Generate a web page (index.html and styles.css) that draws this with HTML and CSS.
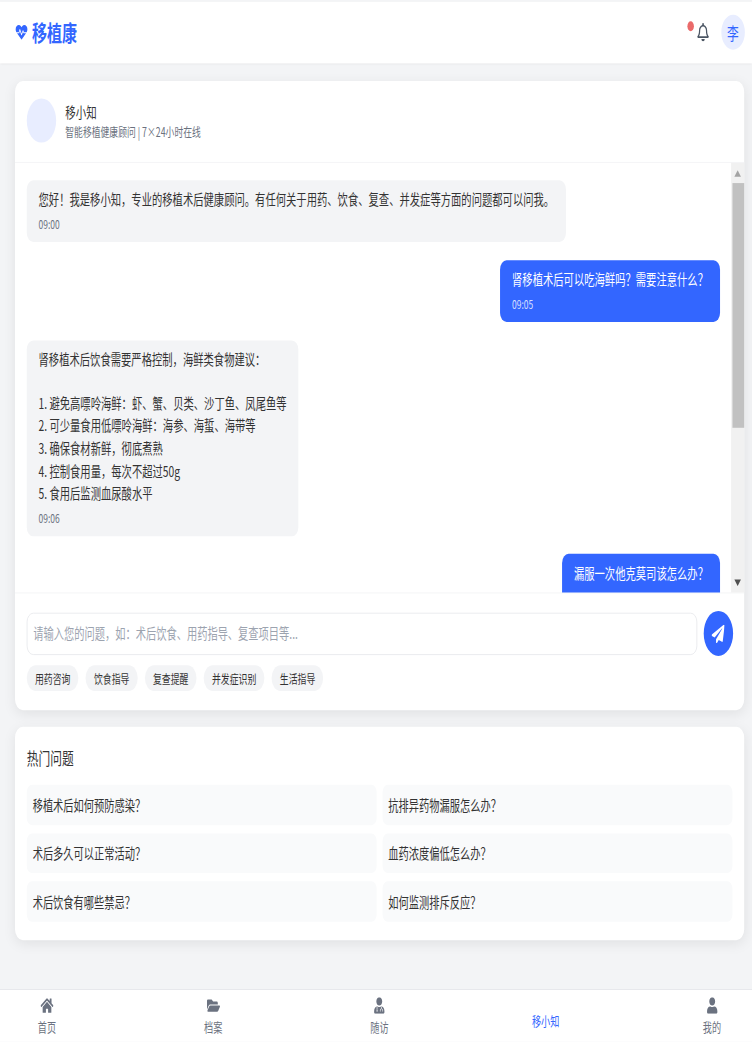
FILE: index.html

```html
<!DOCTYPE html>
<html lang="zh-CN">
<head>
    <meta charset="UTF-8">
    <meta name="viewport" content="width=device-width, initial-scale=1.0">
    <title>移植康 - 移小知</title>
    <link rel="stylesheet" href="styles.css">
</head>
<body>
    <div class="frame">
    <div class="page">
        <header class="topbar">
            <div class="brand">
                <svg class="brand-icon" viewBox="0 0 512 512"><path d="M320.2 243.8l-49.7 99.4c-6 12.1-23.4 11.7-28.9-.6l-56.9-126.3-30 71.7H60.6l182.5 186.5c7.1 7.3 18.6 7.3 25.7 0L451.4 288H342.3l-22.1-44.2zM473.7 73.9l-2.4-2.5c-51.5-52.6-135.8-52.6-187.4 0L256 100l-27.9-28.5c-51.5-52.7-135.9-52.7-187.4 0l-2.4 2.4C-10.4 123.7-12.5 203 31 256h102.4l35.9-86.2c5.4-12.9 23.6-13.2 29.4-.4l58.2 129.3 49-97.9c5.9-11.8 22.7-11.8 28.6 0l27.6 55.2H481c43.5-53 41.4-132.3-7.3-182.1z"/></svg>
                <span>移植康</span>
            </div>
            <div class="top-actions">
                <div class="bell">
                    <span class="bell-dot"></span>
                    <svg class="bell-icon" viewBox="0 0 448 512"><path d="M439.39 362.29c-19.32-20.76-55.47-51.99-55.47-154.29 0-77.7-54.48-139.9-127.94-155.16V32c0-17.67-14.32-32-31.98-32s-31.98 14.33-31.98 32v20.84C118.56 68.1 64.08 130.3 64.08 208c0 102.3-36.15 133.53-55.47 154.29-6 6.45-8.66 14.16-8.61 21.71.11 16.4 12.98 32 32.1 32h383.8c19.12 0 32-15.6 32.1-32 .05-7.55-2.61-15.27-8.61-21.71zM67.53 368c21.22-27.97 44.42-74.33 44.53-159.42 0-.2-.06-.38-.06-.58 0-61.86 50.14-112 112-112s112 50.14 112 112c0 .2-.06.38-.06.58.11 85.1 23.31 131.46 44.53 159.42H67.53zM224 512c35.32 0 63.97-28.65 63.97-64H160.03c0 35.35 28.65 64 63.97 64z"/></svg>
                </div>
                <div class="user-avatar">李</div>
            </div>
        </header>

        <main class="content">
            <section class="card chat">
                <div class="chat-head">
                    <div class="bot-avatar"></div>
                    <div>
                        <div class="bot-name">移小知</div>
                        <div class="bot-desc">智能移植健康顾问 | 7×24小时在线</div>
                    </div>
                </div>

                <div class="chat-body">
                    <div class="messages">
                        <div class="msg">
                            <div>您好！我是移小知，专业的移植术后健康顾问。有任何关于用药、饮食、复查、并发症等方面的问题都可以问我。</div>
                            <div class="msg-time">09:00</div>
                        </div>
                        <div class="msg msg-user">
                            <div>肾移植术后可以吃海鲜吗？需要注意什么？</div>
                            <div class="msg-time">09:05</div>
                        </div>
                        <div class="msg">
                            <div>肾移植术后饮食需要严格控制，海鲜类食物建议：<br><br>1. 避免高嘌呤海鲜：虾、蟹、贝类、沙丁鱼、凤尾鱼等<br>2. 可少量食用低嘌呤海鲜：海参、海蜇、海带等<br>3. 确保食材新鲜，彻底煮熟<br>4. 控制食用量，每次不超过50g<br>5. 食用后监测血尿酸水平</div>
                            <div class="msg-time">09:06</div>
                        </div>
                        <div class="msg msg-user msg-cut">
                            <div>漏服一次他克莫司该怎么办？</div>
                        </div>
                    </div>
                    <div class="scrollbar">
                        <div class="scroll-btn"><span class="arrow-up"></span></div>
                        <div class="scroll-track"><div class="scroll-thumb"></div></div>
                        <div class="scroll-btn"><span class="arrow-down"></span></div>
                    </div>
                </div>

                <div class="composer">
                    <div class="input-row">
                        <input class="chat-input" type="text" placeholder="请输入您的问题，如：术后饮食、用药指导、复查项目等...">
                        <button class="send-btn">
                            <svg viewBox="0 0 512 512"><path d="M476 3.2L12.5 270.6c-18.1 10.4-15.8 35.6 2.2 43.2L121 358.4l287.3-253.2c5.5-4.9 13.3 2.6 8.6 8.3L176 407v80.5c0 23.6 28.5 32.9 42.5 15.8L282 426l124.6 52.2c14.2 6 30.4-2.9 33-18.2l72-432C515 7.8 493.3-6.8 476 3.2z"/></svg>
                        </button>
                    </div>
                    <div class="chips">
                        <span class="chip">用药咨询</span>
                        <span class="chip">饮食指导</span>
                        <span class="chip">复查提醒</span>
                        <span class="chip">并发症识别</span>
                        <span class="chip">生活指导</span>
                    </div>
                </div>
            </section>

            <section class="card hot">
                <h3 class="hot-title">热门问题</h3>
                <div class="hot-grid">
                    <div class="hot-item">移植术后如何预防感染？</div>
                    <div class="hot-item">抗排异药物漏服怎么办？</div>
                    <div class="hot-item">术后多久可以正常活动？</div>
                    <div class="hot-item">血药浓度偏低怎么办？</div>
                    <div class="hot-item">术后饮食有哪些禁忌？</div>
                    <div class="hot-item">如何监测排斥反应？</div>
                </div>
            </section>
        </main>

        <nav class="tabbar">
            <a class="tab">
                <svg class="tab-icon" viewBox="0 0 576 512"><path d="M280.37 148.26L96 300.11V464a16 16 0 0 0 16 16l112.06-.29a16 16 0 0 0 15.92-16V368a16 16 0 0 1 16-16h64a16 16 0 0 1 16 16v95.64a16 16 0 0 0 16 16.05L464 480a16 16 0 0 0 16-16V300L295.67 148.26a12.19 12.19 0 0 0-15.3 0zM571.6 251.47L488 182.56V44.05a12 12 0 0 0-12-12h-56a12 12 0 0 0-12 12v72.61L318.47 43a48 48 0 0 0-61 0L4.34 251.47a12 12 0 0 0-1.6 16.9l25.5 31A12 12 0 0 0 45.15 301l235.22-193.74a12.19 12.19 0 0 1 15.3 0L530.9 301a12 12 0 0 0 16.9-1.6l25.5-31a12 12 0 0 0-1.7-16.93z"/></svg>
                <span>首页</span>
            </a>
            <a class="tab">
                <svg class="tab-icon" viewBox="0 0 576 512"><path d="M572.694 292.093L500.27 416.248A63.997 63.997 0 0 1 444.989 448H45.025c-18.523 0-30.064-20.093-20.731-36.093l72.424-124.155A64 64 0 0 1 152 256h399.964c18.523 0 30.064 20.093 20.73 36.093zM152 224h328v-48c0-26.51-21.49-48-48-48H272l-64-64H48C21.49 64 0 85.49 0 112v278.046l69.077-118.418C86.214 242.25 117.989 224 152 224z"/></svg>
                <span>档案</span>
            </a>
            <a class="tab">
                <svg class="tab-icon" viewBox="0 0 448 512"><path d="M224 256c70.7 0 128-57.3 128-128S294.7 0 224 0 96 57.3 96 128s57.3 128 128 128zm89.6 32h-16.7c-22.2 10.2-46.9 16-72.9 16s-50.6-5.8-72.9-16h-16.7C60.2 288 0 348.2 0 422.4V464c0 26.5 21.5 48 48 48h352c26.5 0 48-21.5 48-48v-41.6c0-74.2-60.2-134.4-134.4-134.4z"/><path class="tab-icon-mark" d="M128 300v90M320 300v50M272 440v-40a48 48 0 0 1 96 0v40"/><circle class="tab-icon-dot" cx="128" cy="420" r="26"/></svg>
                <span>随访</span>
            </a>
            <a class="tab tab-active">
                <span>移小知</span>
            </a>
            <a class="tab">
                <svg class="tab-icon" viewBox="0 0 448 512"><path d="M224 256c70.7 0 128-57.3 128-128S294.7 0 224 0 96 57.3 96 128s57.3 128 128 128zm89.6 32h-16.7c-22.2 10.2-46.9 16-72.9 16s-50.6-5.8-72.9-16h-16.7C60.2 288 0 348.2 0 422.4V464c0 26.5 21.5 48 48 48h352c26.5 0 48-21.5 48-48v-41.6c0-74.2-60.2-134.4-134.4-134.4z"/></svg>
                <span>我的</span>
            </a>
        </nav>
    </div>
    </div>
</body>
</html>
```

FILE: styles.css

```css
* {
    box-sizing: border-box;
}

html, body {
    margin: 0;
    height: 100%;
    overflow: hidden;
}

body {
    font-family: "Noto Sans CJK SC", "Noto Sans", sans-serif;
    color: #333;
    background-color: white;
}

.frame {
    width: 752px;
    height: 1042px;
    overflow: hidden;
}

/* the whole layout is drawn narrower than it is tall */
.page {
    width: 1151.5px;
    height: 1132px;
    padding-top: 2px;
    display: flex;
    flex-direction: column;
    background-color: #f3f4f6;
    transform: scale(0.6528, 0.92);
    transform-origin: 0 0;
}

.topbar {
    flex: none;
    height: 67px;
    padding: 0 11px 2px 23px;
    display: flex;
    align-items: center;
    justify-content: space-between;
    background-color: white;
    box-shadow: 0 1px 3px rgba(0,0,0,0.1);
}

.brand {
    display: flex;
    align-items: center;
    gap: 6px;
    font-size: 23px;
    font-weight: 700;
    color: #3366ff;
}

.brand-icon {
    width: 20px;
    height: 18px;
    fill: #3366ff;
}

.top-actions {
    display: flex;
    align-items: center;
    gap: 18px;
}

.bell {
    position: relative;
    display: flex;
}

.bell-icon {
    width: 20px;
    height: 20px;
    fill: #4b5563;
}

.bell-dot {
    position: absolute;
    top: -2px;
    left: -14px;
    width: 10px;
    height: 11px;
    border-radius: 50%;
    background-color: #ea6a6a;
}

.user-avatar {
    width: 36px;
    height: 38px;
    border-radius: 50%;
    display: flex;
    align-items: center;
    justify-content: center;
    font-size: 18px;
    color: #3366ff;
    background-color: #e8edff;
}

.content {
    flex: 1;
    padding: 19px 12px 0 23px;
}

.card {
    background-color: white;
    border-radius: 12px;
    box-shadow: 0 4px 16px rgba(0,0,0,0.08);
}

.chat {
    margin-bottom: 18px;
}

.chat-head {
    height: 89px;
    padding: 0 18px 2px;
    display: flex;
    align-items: center;
    gap: 14px;
    border-bottom: 1px solid #f3f4f6;
}

.bot-avatar {
    width: 45px;
    height: 48px;
    border-radius: 50%;
    background-color: #e8edff;
}

.bot-name {
    font-size: 16px;
    line-height: 24px;
}

.bot-desc {
    font-size: 13.5px;
    line-height: 20px;
    color: #6b7280;
}

.chat-body {
    height: 467px;
    display: flex;
}

.messages {
    flex: 1;
    padding: 19px 17px 0 18px;
    display: flex;
    flex-direction: column;
    gap: 19.5px;
    overflow: hidden;
}

.scrollbar {
    flex: none;
    width: 20px;
    display: flex;
    flex-direction: column;
    background-color: #f1f1f1;
}

.scroll-btn {
    flex: none;
    height: 22px;
    display: flex;
    align-items: center;
    justify-content: center;
}

.arrow-up {
    border-left: 5px solid transparent;
    border-right: 5px solid transparent;
    border-bottom: 7px solid #a3a3a3;
}

.arrow-down {
    border-left: 5px solid transparent;
    border-right: 5px solid transparent;
    border-top: 7px solid #505050;
}

.scroll-track {
    flex: 1;
    padding-left: 2px;
}

.scroll-thumb {
    height: 266px;
    background-color: #c1c1c1;
}

.msg {
    flex: none;
    align-self: flex-start;
    padding: 9px 18px;
    font-size: 15.8px;
    line-height: 24.3px;
    border-radius: 10px;
    background-color: #f3f4f6;
}

.msg-user {
    align-self: flex-end;
    color: white;
    background-color: #3366ff;
}

.msg-cut {
    padding-bottom: 34px;
}

.msg-time {
    margin-top: 5px;
    font-size: 13px;
    line-height: 20px;
    color: #6b7280;
}

.msg-user .msg-time {
    color: rgba(255,255,255,0.8);
}

.composer {
    padding: 19px 17px 21px 18px;
    border-top: 1px solid #f3f4f6;
}

.input-row {
    display: flex;
    align-items: center;
    gap: 10px;
}

.chat-input {
    flex: 1;
    height: 46px;
    padding: 0 9px;
    font-family: inherit;
    font-size: 15.7px;
    border: 1px solid #e5e7eb;
    border-radius: 10px;
    outline: none;
}

.chat-input::placeholder {
    color: #9ca3af;
}

.send-btn {
    width: 45px;
    height: 49px;
    padding: 0;
    display: flex;
    align-items: center;
    justify-content: center;
    border: none;
    border-radius: 50%;
    background-color: #3366ff;
}

.send-btn svg {
    width: 20px;
    height: 20px;
    fill: white;
}

.chips {
    margin-top: 10px;
    display: flex;
    gap: 11px;
}

.chip {
    height: 28px;
    padding: 0 12.5px;
    display: flex;
    align-items: center;
    font-size: 13.6px;
    border-radius: 14px;
    background-color: #f3f4f6;
}

.hot {
    height: 232px;
    padding: 20px 18px;
}

.hot-title {
    margin: 0 0 15px;
    font-size: 18px;
    font-weight: 400;
    line-height: 28px;
}

.hot-grid {
    display: grid;
    grid-template-columns: 1fr 1fr;
    gap: 9px;
}

.hot-item {
    height: 43.7px;
    padding: 0 9px;
    display: flex;
    align-items: center;
    font-size: 15.7px;
    border-radius: 8px;
    background-color: #f9fafb;
}

.tabbar {
    flex: none;
    height: 57px;
    padding: 0 31px 0 42px;
    display: flex;
    justify-content: space-between;
    background-color: white;
    border-top: 1px solid #e5e7eb;
}

.tab {
    width: 60px;
    padding-top: 2px;
    display: flex;
    flex-direction: column;
    align-items: center;
    justify-content: center;
    gap: 4px;
    font-size: 14px;
    line-height: 20px;
    color: #6b7280;
}

.tab-icon {
    width: 20px;
    height: 18px;
    fill: #6b7280;
}

.tab-icon-mark {
    fill: none;
    stroke: white;
    stroke-width: 24;
}

.tab-icon-dot {
    fill: white;
}

.tab-active {
    padding-top: 9px;
    color: #3366ff;
}
```
